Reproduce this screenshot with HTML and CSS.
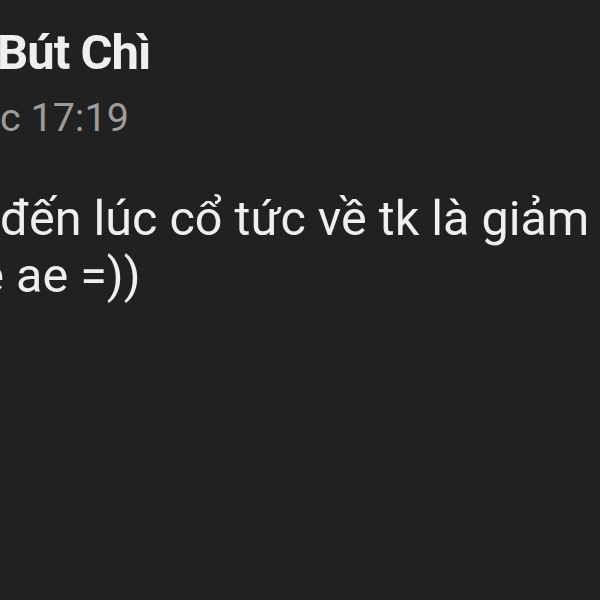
FILE: index.html
```html
<!DOCTYPE html>
<html lang="vi">
<head>
    <meta charset="UTF-8">
    <meta name="viewport" content="width=device-width, initial-scale=1.0">
    <title>Tin nhắn</title>
    <link rel="stylesheet" href="styles.css">
</head>
<body>

    <div class="post">
        <div class="author"><span class="cut">Hùng</span><span class="author-name">Bút Chì</span></div>
        <div class="time"><span class="cut">Hôm qua lú</span>c 17:19</div>

        <div class="message">
            <div class="line"><span class="cut">Mấy tháng trước mua vào, </span>đến lúc cổ tức về tk là giảm</div>
            <div class="line line-2"><span class="cut">giá rồi, chia sẻ</span> ae =))</div>
        </div>
    </div>

</body>
</html>
```

FILE: styles.css
```css
body {
    margin: 0;
    padding: 0;
    background-color: #212121;
    font-family: Roboto, "Noto Sans", Arial, sans-serif;
    overflow: hidden;
}
.post {
    padding-top: 25px;
    color: #efefef;
}
/* phần chữ bị cắt ở mép trái ảnh chụp */
.cut {
    display: inline-block;
    width: 0;
    direction: rtl;
    white-space: nowrap;
}
.author {
    font-size: 49px;
    font-weight: bold;
    line-height: 56px;
    letter-spacing: -1px;
    white-space: nowrap;
}
.author-name {
    margin-left: -3px;
}
.time {
    margin-top: 15px;
    font-size: 39.5px;
    line-height: 44px;
    color: #9c9c9c;
    white-space: nowrap;
}
.message {
    margin-top: 50px;
    font-size: 48.5px;
    line-height: 57px;
}
.line {
    white-space: nowrap;
}
.line-2 {
    padding-left: 4px;
}
```
